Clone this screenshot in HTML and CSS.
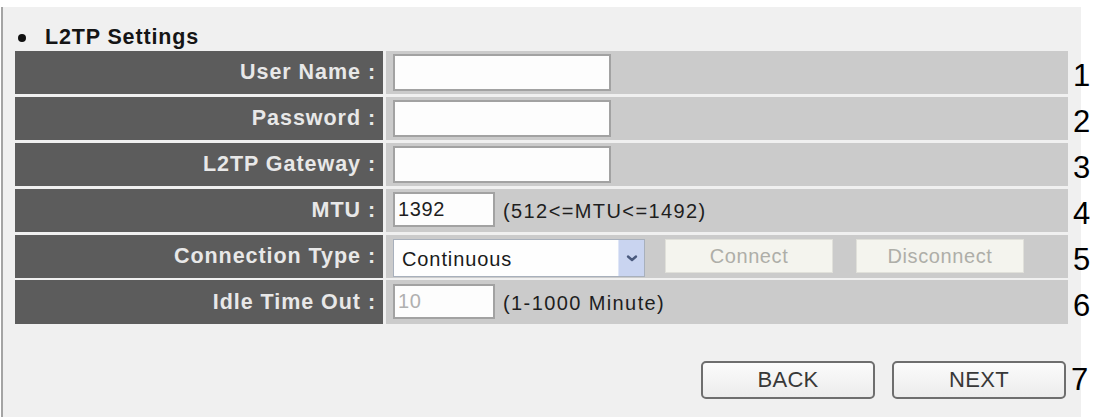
FILE: index.html
```html
<!DOCTYPE html>
<html>
<head>
<meta charset="utf-8">
<title>L2TP Settings</title>
<link rel="stylesheet" href="styles.css">
</head>
<body>
<div class="panel">
  <div class="title"><span class="bullet"></span><span class="title-text">L2TP Settings</span></div>
  <div class="table">
    <div class="row">
      <div class="label">User Name :</div>
      <div class="value"><div class="input wide"></div></div>
      <div class="num">1</div>
    </div>
    <div class="row">
      <div class="label">Password :</div>
      <div class="value"><div class="input wide"></div></div>
      <div class="num">2</div>
    </div>
    <div class="row">
      <div class="label">L2TP Gateway :</div>
      <div class="value"><div class="input wide"></div></div>
      <div class="num">3</div>
    </div>
    <div class="row">
      <div class="label">MTU :</div>
      <div class="value"><div class="input short">1392</div><span class="hint">(512&lt;=MTU&lt;=1492)</span></div>
      <div class="num">4</div>
    </div>
    <div class="row">
      <div class="label">Connection Type :</div>
      <div class="value">
        <div class="select"><span class="select-text">Continuous</span><span class="select-arrow"><svg width="14" height="9" viewBox="0 0 14 9"><path d="M3 2.5 L7 6 L11 2.5" fill="none" stroke="#4a5a7e" stroke-width="2.4" stroke-linecap="round" stroke-linejoin="round"/></svg></span></div>
        <div class="btn-disabled first">Connect</div>
        <div class="btn-disabled second">Disconnect</div>
      </div>
      <div class="num">5</div>
    </div>
    <div class="row">
      <div class="label">Idle Time Out :</div>
      <div class="value"><div class="input short dim">10</div><span class="hint">(1-1000 Minute)</span></div>
      <div class="num">6</div>
    </div>
  </div>
  <div class="footer">
    <div class="btn">BACK</div>
    <div class="btn">NEXT</div>
    <div class="num footnum">7</div>
  </div>
</div>
</body>
</html>
```

FILE: styles.css
```css
html, body {
  margin: 0;
  padding: 0;
  background: #ffffff;
}
body {
  font-family: "Liberation Sans", Arial, sans-serif;
  width: 1095px;
  height: 417px;
  overflow: hidden;
}
.panel {
  margin: 7px 0 0 1px;
  width: 1080px;
  height: 410px;
  background: #f0f0f0;
  border-left: 2px solid #a4a4a4;
  box-sizing: border-box;
  padding-left: 12px;
}
.title {
  display: flex;
  align-items: center;
  height: 24px;
  padding-top: 18px;
  margin-bottom: 2px;
  padding-left: 3px;
}
.bullet {
  width: 8px;
  height: 8px;
  border-radius: 50%;
  background: #111;
  margin-right: 19px;
  margin-top: 2px;
}
.title-text {
  font-weight: bold;
  font-size: 21.5px;
  letter-spacing: 0.85px;
  color: #151515;
  line-height: 24px;
}
.table {
  display: flex;
  flex-direction: column;
  gap: 2.6px;
}
.row {
  display: grid;
  grid-template-columns: 368px 682px 22px;
  column-gap: 3px;
  height: 43.3px;
}
.label {
  background: #5c5c5c;
  color: #e8e8e8;
  font-weight: bold;
  font-size: 21.5px;
  letter-spacing: 0.95px;
  text-align: right;
  padding-right: 7px;
  display: flex;
  align-items: center;
  justify-content: flex-end;
}
.value {
  background: #cbcbcb;
  display: flex;
  align-items: center;
  padding-left: 7px;
}
.input {
  box-sizing: border-box;
  background: #fdfdfd;
  border: 2px solid #a2a2a2;
  font-size: 20px;
  letter-spacing: 0.6px;
  color: #1e1e1e;
  display: flex;
  align-items: center;
  padding-left: 3px;
}
.input.wide {
  width: 218px;
  height: 37px;
}
.input.short {
  width: 102px;
  height: 35px;
  margin-top: -2px;
}
.input.dim {
  color: #b0b0b0;
}
.hint {
  margin-left: 8px;
  font-size: 20px;
  letter-spacing: 1.4px;
  color: #1e1e1e;
  margin-top: 2px;
}
.select {
  box-sizing: border-box;
  width: 252px;
  height: 38px;
  background: #fefefe;
  border: 1px solid #a8b0bc;
  display: flex;
  align-items: stretch;
  margin-top: 4px;
}
.select-text {
  flex: 1;
  display: flex;
  align-items: center;
  padding-left: 8px;
  font-size: 20px;
  letter-spacing: 0.9px;
  color: #1a1a1a;
  padding-top: 2px;
}
.select-arrow {
  width: 25px;
  background: #c9d4f0;
  border-left: 1px solid #dfe6f7;
  display: flex;
  align-items: center;
  justify-content: center;
}
.btn-disabled {
  box-sizing: border-box;
  width: 168px;
  height: 34px;
  background: #f4f4ee;
  border: 1px solid #e0e0da;
  color: #aeaea8;
  font-size: 20px;
  letter-spacing: 0.6px;
  display: flex;
  align-items: center;
  justify-content: center;
}
.btn-disabled.first {
  margin-left: 20px;
}
.btn-disabled.second {
  margin-left: 23px;
}
.num {
  font-size: 31px;
  color: #000;
  display: flex;
  align-items: center;
  padding-left: 2px;
  padding-top: 6px;
  line-height: 1;
}
.footer {
  display: flex;
  justify-content: flex-end;
  align-items: center;
  width: 1078px;
  margin-top: 37px;
  gap: 17px;
}
.btn {
  box-sizing: border-box;
  width: 174px;
  height: 38px;
  border: 2px solid #6e6e6e;
  border-radius: 5px;
  background: linear-gradient(#fbfbfb, #ececec);
  color: #383838;
  font-size: 22px;
  letter-spacing: 0.3px;
  display: flex;
  align-items: center;
  justify-content: center;
}
.footnum {
  margin-left: -14px;
  width: 22px;
  padding-top: 0;
}
```
